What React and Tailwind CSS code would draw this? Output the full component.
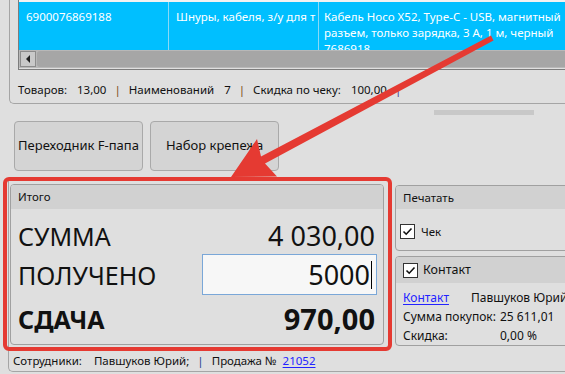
import React from "react"

function CheckBox() {
  return (
    <span className="w-[15px] h-[15px] border border-[#333] bg-white flex items-center justify-center shrink-0">
      <svg width="11" height="11" viewBox="0 0 11 11">
        <polyline points="1.5,5.5 4.2,8.2 9.5,2.5" fill="none" stroke="#111" strokeWidth="1.6" />
      </svg>
    </span>
  )
}

function Sep({ color = "text-[#7a4b18]" }) {
  return <span className={`${color} mx-[8px]`}>|</span>
}

export default function App() {
  return (
    <div className="relative w-[565px] h-[374px] overflow-hidden bg-[#dfdfdf] text-[#111] font-['Noto_Sans',sans-serif]">
      {/* верхняя панель с таблицей */}
      <div className="ml-[9px] h-[104px] border-l border-b border-[#a5a5a5] rounded-bl-[5px] pl-[8px]">
        <div className="h-[70px] border-l border-b border-[#7d7d7d] flex flex-col">
          <div className="h-[2px] bg-[#f2f2f2]" />
          <div className="h-[48px] bg-[#00bfff] flex text-white text-[11.5px] leading-[16px] overflow-hidden">
            <div className="w-[150px] shrink-0 border-r border-[#8ad9f7] pl-[7px] pt-[7px]">6900076869188</div>
            <div className="w-[150px] shrink-0 border-r border-[#8ad9f7] pl-[7px] pt-[7px] whitespace-nowrap overflow-hidden">Шнуры, кабеля, з/у для т</div>
            <div className="w-[250px] shrink-0 pl-[5px] pt-[7px]">
              Кабель Hoco X52, Type-C - USB, магнитный разъем, только зарядка, 3 А, 1 м, черный 7686918
            </div>
          </div>
          <div className="h-[18px] bg-[#b8b8b8] flex items-center pl-[1px]">
            <div className="w-[16px] h-[16px] border border-[#8c8c8c] bg-[#c9c9c9] flex items-center justify-center">
              <svg width="6" height="8" viewBox="0 0 6 8"><polygon points="5,0 5,8 1,4" fill="#222" /></svg>
            </div>
            <div className="flex-1 h-[16px] ml-[1px] bg-[#a6a6a6] rounded-l-[3px]" />
          </div>
        </div>
        <div className="pt-[12px] text-[11.5px] leading-[16px] whitespace-nowrap">
          <span>Товаров:</span>
          <span className="ml-[10px]">13,00</span>
          <Sep />
          <span>Наименований</span>
          <span className="ml-[10px]">7</span>
          <Sep />
          <span>Скидка по чеку:</span>
          <span className="ml-[10px]">100,00</span>
          <Sep color="text-[#4a3a8a]" />
        </div>
      </div>

      <div className="ml-[434px] mt-[6px] w-[100px] h-[5px] bg-[#c8c8c8]" />

      {/* быстрые кнопки */}
      <div className="flex gap-[7px] pl-[14px] mt-[6px]">
        <div className="w-[129px] h-[50px] border border-[#a9a9a9] rounded-[4px] bg-[#d4d4d4] flex items-center justify-center text-[13px] whitespace-nowrap overflow-hidden">
          Переходник F-папа
        </div>
        <div className="w-[129px] h-[50px] border border-[#a9a9a9] rounded-[4px] bg-[#d4d4d4] flex items-center justify-center text-[13px] whitespace-nowrap overflow-hidden">
          Набор крепежа
        </div>
      </div>

      {/* нижняя панель */}
      <div className="ml-[8px] mt-[9px] h-[192px] border-l border-b border-[#a5a5a5] rounded-bl-[5px] flex flex-col">
        <div className="flex pt-[4px]">
          <div className="ml-[1px] w-[374px] shrink-0 h-[161px] border border-[#a0a0a0] rounded-[4px] overflow-hidden flex flex-col">
            <div className="h-[24px] bg-[#d1d1d1] text-[11.5px] px-[7px] flex items-center">Итого</div>
            <div className="flex-1 flex flex-col pt-[10px] pl-[7px] pr-[8px] text-[25px] leading-[28px]">
              <div className="h-[34px] flex items-center justify-between">
                <span>СУММА</span>
                <span className="text-[27px]">4 030,00</span>
              </div>
              <div className="h-[43px] flex items-center justify-between">
                <span>ПОЛУЧЕНО</span>
                <div className="w-[175px] h-[41px] mr-[-2px] border border-[#7aa7d8] bg-[#f7f7f7] flex items-center justify-end pr-[4px]">
                  <span className="text-[27px]">5000</span>
                  <span className="w-[1px] h-[28px] bg-black ml-[1px]" />
                </div>
              </div>
              <div className="h-[46px] flex items-center justify-between font-bold">
                <span>СДАЧА</span>
                <span className="text-[29px]">970,00</span>
              </div>
            </div>
          </div>

          <div className="ml-[11px] mt-[1px] w-[180px] shrink-0 flex flex-col text-[11.5px]">
            <div className="h-[66px] border border-[#a0a0a0] rounded-[4px] overflow-hidden flex flex-col">
              <div className="h-[23px] bg-[#d1d1d1] px-[7px] flex items-center">Печатать</div>
              <div className="flex items-center gap-[6px] pl-[4px] pt-[14px]">
                <CheckBox />
                <span>Чек</span>
              </div>
            </div>
            <div className="mt-[5px] h-[90px] border border-[#a0a0a0] rounded-[4px] overflow-hidden flex flex-col">
              <div className="h-[28px] bg-[#d1d1d1] pl-[7px] flex items-center gap-[5px]">
                <CheckBox />
                <span className="text-[12.5px]">Контакт</span>
              </div>
              <div className="pt-[5px] pl-[7px] text-[12px] leading-[19px] whitespace-nowrap">
                <div className="flex">
                  <span className="w-[68px] text-[#2323ff] underline underline-offset-2">Контакт</span>
                  <span>Павшуков Юрий</span>
                </div>
                <div className="flex">
                  <span className="w-[97px]">Сумма покупок:</span>
                  <span>25 611,01</span>
                </div>
                <div className="flex">
                  <span className="w-[97px]">Скидка:</span>
                  <span>0,00 %</span>
                </div>
              </div>
            </div>
          </div>
        </div>

        <div className="pt-[7px] pl-[4px] text-[11.5px] leading-[16px] whitespace-nowrap">
          <span>Сотрудники:</span>
          <span className="ml-[12px]">Павшуков Юрий;</span>
          <Sep color="text-[#1c3f8f]" />
          <span>Продажа №</span>
          <span className="ml-[6px] text-[#2323ff] underline underline-offset-2">21052</span>
        </div>
      </div>

      {/* аннотация */}
      <div className="absolute left-[3px] top-[177px] w-[389px] h-[174px] border-[4px] border-[#e53a32] rounded-[6px] pointer-events-none" />
      <svg className="absolute left-0 top-0 pointer-events-none" width="565" height="374" viewBox="0 0 565 374">
        <polygon
          points="231,177 257,139 261,156.5 491,35.5 493.5,40.5 265,163.5 277,176.5"
          fill="#e53a32"
        />
      </svg>
    </div>
  )
}
